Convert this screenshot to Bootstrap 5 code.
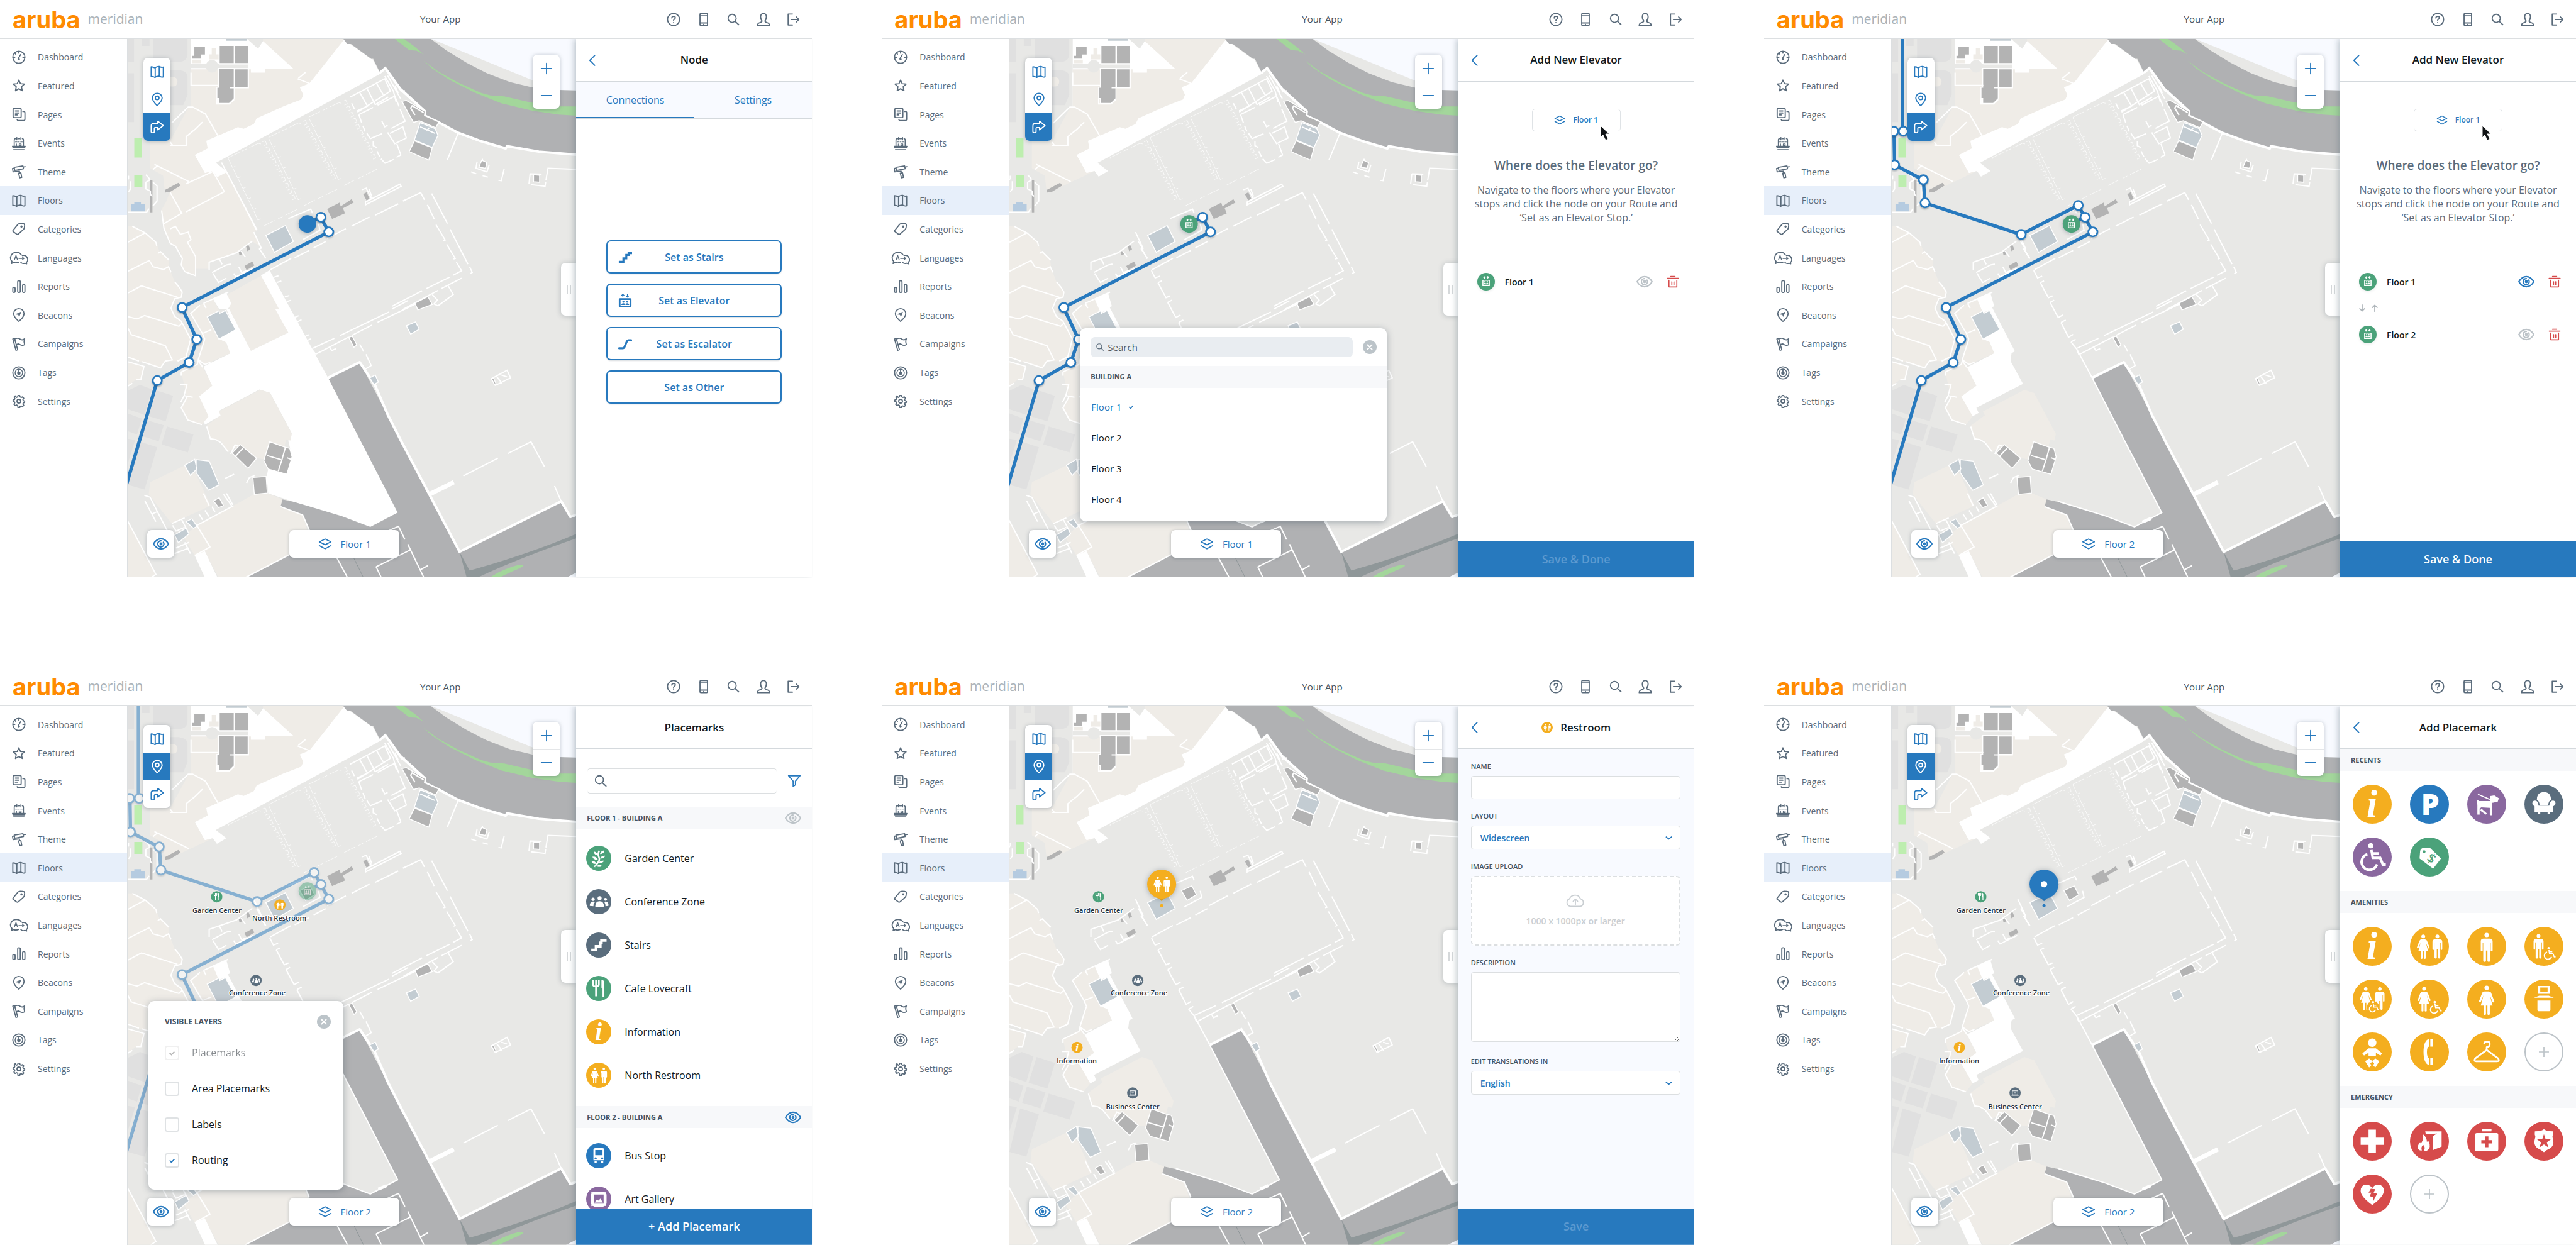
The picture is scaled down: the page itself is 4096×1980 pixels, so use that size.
<!DOCTYPE html>
<html lang="en">
<head>
<meta charset="utf-8">
<meta name="viewport" content="width=device-width, initial-scale=1">
<title>Meridian floor editor</title>
<link rel="stylesheet" href="https://cdn.jsdelivr.net/npm/bootstrap@5.3.0/dist/css/bootstrap.min.css">
<style>
:root{--blue:#2779be;--slate:#5a6b7b;--ink:#101820;--line:#dcdfe1;--pale:#f8faff;--amber:#f4ae1f;--green:#4ba27a;--purple:#8a689f;--red:#d64b4b}
body{font-family:"Open Sans",sans-serif;font-size:16px;color:var(--ink);background:#fff;overflow-x:hidden}
svg{display:block}
.ic{fill:none;stroke:currentColor;stroke-width:2;stroke-linecap:round;stroke-linejoin:round;width:22px;height:22px;flex:none}
.ic.eye-ic{width:26px;height:26px}
.ic.s9{width:9px;height:9px}.ic.s12{width:12px;height:12px}.ic.s14{width:14px;height:14px}.ic.s18{width:18px;height:18px}.ic.s20{width:20px;height:22px}
.board{display:grid;grid-template-columns:repeat(3,minmax(0,1fr));gap:143px 111px}
.app-head{height:62px;border-bottom:1px solid var(--line);color:var(--slate)}
.brand-box{width:341px;padding-left:20px}
.logo-word{font-family:Inter,sans-serif;font-weight:700;font-size:38px;line-height:44px;color:#ff8b00}
.sub-word{font-size:21px;color:#aab2b8;margin-left:12px}
.app-title{font-size:15px;color:#46525d}
.head-tools{width:232px;padding-right:18px}
.tool-btn{color:var(--slate);padding:0;border:0;width:24px;height:24px;display:flex;align-items:center;justify-content:center}
.app-nav{width:203px;border-right:1px solid var(--line);padding-top:6px;flex:none}
.nav-items{height:593px}
.nav-items a{flex:1 1 0;color:var(--slate);font-size:14px;text-decoration:none;padding-left:14px}
.nav-items a.on{background:#e7effa}
.nav-items .slot{width:32px;margin-right:14px;display:flex;justify-content:center}
.nav-items .slot .wide{width:30px}
.map-box{position:relative;overflow:hidden;background:#e8e8e6}
.map-box>svg{width:100%;height:auto}
.float-card{position:absolute;background:#fff;border-radius:7px;box-shadow:0 1px 6px rgba(60,75,90,.35);overflow:hidden}
.float-card .btn{border:0;border-radius:0;width:43px;height:44px;padding:0;display:flex;align-items:center;justify-content:center;color:var(--blue)}
.float-card .btn.on{background:var(--blue);color:#fff}
.tools-left{left:25px;top:30px}
.tools-zoom{right:26px;top:25px}
.tools-zoom .btn{height:43px}
.tools-zoom .btn+.btn{border-top:1px solid #e4e6e8}
.grip{position:absolute;right:0;top:356px;width:24px;height:84px;background:#fff;border:0;border-radius:7px 0 0 7px;box-shadow:0 1px 8px rgba(60,75,90,.3);display:flex;gap:3px;align-items:center;justify-content:center;padding:0}
.grip i{width:2px;height:15px;background:#d5d8da}
.eye-box{left:31px;bottom:31px}
.floor-box{position:absolute;left:0;right:24px;bottom:31px;display:flex;justify-content:center}
.floor-btn{width:175px;height:44px;background:#fff;border:0;border-radius:7px;box-shadow:0 1px 5px rgba(60,75,90,.35);color:var(--blue);font-size:15px;font-weight:500;display:flex;align-items:center;justify-content:center;gap:14px}
.side{width:375px;flex:none;contain:size;background:#fff;position:relative;z-index:1;box-shadow:-3px 0 9px rgba(90,110,120,.38);clip-path:inset(0 0 0 -16px)}
.side-head{height:68px;flex:none;border-bottom:1px solid #d4d9dd;position:relative;background:#fff}
.side-head h2{font-size:17px;font-weight:600;margin:0}
.back-btn{position:absolute;left:15px;top:23px;width:22px;height:22px;border:0;background:none;padding:0;color:var(--blue)}
.tabs-row{height:59px;background:var(--pale);border-bottom:1px solid #d4d9dd}
.tabs-row a{flex:1;color:var(--blue);text-decoration:none;display:flex;align-items:center;justify-content:center}
.tabs-row a.on{box-shadow:inset 0 -2px var(--blue)}
.set-list{padding:193px 48px 0;display:grid;gap:16px}
.set-btn{height:53px;border:2px solid var(--blue);border-radius:7px;background:#fff;color:var(--blue);font-weight:600;position:relative;box-shadow:0 1px 2px rgba(60,75,90,.2);font-size:16px}
.set-btn svg{position:absolute;left:17px;top:14px}
.cta{height:58px;flex:none;margin-top:auto;border:0;border-radius:0;background:var(--blue);color:#fff;font-size:18px;font-weight:600;z-index:1}
.cta:disabled{background:var(--blue);color:#5d9ad0;opacity:1}
.chip{width:141px;height:36px;margin:43px auto 0;border:1px solid #dfe3e6;border-radius:5px;background:#fff;color:var(--blue);font-size:12px;font-weight:600;display:flex;align-items:center;justify-content:center;gap:12px;position:relative}
.chip .cursor{position:absolute;left:107px;top:25px}
.ask{color:var(--slate);text-align:center;padding:0 20px}
.ask h3{font-size:19px;line-height:24px;font-weight:600;margin:42px 0 16px}
.ask p{line-height:22px;margin:0 0 71px}
.stop-row{height:40px;padding:0 24px 0 30px;font-size:14px;font-weight:600}
.stop-row .btn{padding:0;border:0}
.stop-row .see{margin-right:22px}
.swap{height:44px;padding-left:29px;color:#aeb5ba}
.t-blue{color:var(--blue)}.t-mute{color:#bcc3c8}.t-red{color:var(--red)}
.disc{border-radius:50%;display:block;color:#fff;padding:0;border:0;flex:none}
.disc svg{width:100%;height:100%}
.d28{width:28px;height:28px}.d40{width:40px;height:40px}.d62{width:62px;height:62px}.d18{width:18px;height:18px}
.c-amber{background:var(--amber)}.c-green{background:var(--green)}.c-slate{background:#5a6d7d}.c-blue{background:var(--blue)}.c-purple{background:var(--purple)}.c-red{background:var(--red)}
.c-none{background:#fff;border:2px solid #bcc3c8;color:#bcc3c8}
.popup{position:absolute;background:#fff;border-radius:9px;box-shadow:0 2px 12px rgba(60,75,90,.4);overflow:hidden}
.pick-pop{left:112px;top:460px;width:488px;height:307px}
.pick-search{position:relative;padding:14px 16px 14px 17px;gap:16px}
.pick-search input{height:32px;border:0;border-radius:7px;background:#e9edf1;padding:0 10px 0 27px;font-size:15px}
.pick-search .lens{position:absolute;left:25px;top:23px;color:var(--slate)}
.x-btn{width:22px;height:22px;border:0;border-radius:50%;background:#bcc4c9;color:#fff;padding:0;display:flex;align-items:center;justify-content:center;flex:none}
.strip{background:#f7f8fa;color:#43525f;font-size:11px;font-weight:700;height:35px;flex:none;display:flex;align-items:center;justify-content:space-between;padding:0 17px}
.floors{padding:6px 0 0;margin:0;list-style:none}
.floors li{height:49px;padding-left:18px;font-size:15px;display:flex;align-items:center;gap:10px}
.layer-pop{left:33px;bottom:88px;width:310px;height:300px;padding:22px 20px 0 26px}
.layer-pop h3{font-size:12px;font-weight:700;color:#43525f;margin:0}
.layer-pop .form-check{height:57px;margin:0;padding:0;display:flex;align-items:center;gap:20px}
.layer-pop .checks{padding-top:10px}
.layer-pop .form-check-input{float:none;margin:0;width:23px;height:23px;border:2px solid #dfe2e4;border-radius:4px;background-color:#fff}
.layer-pop .form-check-input:checked{background-color:#fff;border-color:#dfe2e4;background-image:url("data:image/svg+xml,%3Csvg xmlns='http://www.w3.org/2000/svg' viewBox='0 0 20 20'%3E%3Cpath d='M6 10l3 3 5-5' fill='none' stroke='%232779be' stroke-width='2'/%3E%3C/svg%3E")}
.layer-pop .form-check-input:disabled{filter:grayscale(1)}
.list-scroll{min-height:0}
.find-row{padding:31px 14px 21px 17px;gap:16px}
.find-row .fbox{position:relative;width:303px;flex:none}
.find-row input{height:40px;border:1px solid #dcdfe1;border-radius:5px;padding-left:40px}
.find-row .lens{position:absolute;left:11px;top:9px;color:var(--slate)}
.marks{list-style:none;margin:0;padding:12px 16px 15px}
.marks.next{padding-top:9px}
.marks li{height:69px;display:flex;align-items:center;gap:21px}
.form-side{background:var(--pale)}
.form-area{padding:20px 22px 0 20px}
.form-area .field{margin-bottom:19px}
.form-area label,.form-area .cap{display:block;font-size:11px;line-height:16px;font-weight:600;color:#43525f;margin-bottom:7px}
.form-area .form-control,.form-area .form-select{border:1px solid #dcdfe1;border-radius:4px;font-size:14px;background-color:#fff}
.form-area input.form-control{height:37px}
.form-area .form-select{height:38px;color:var(--blue);font-weight:600;padding:0 36px 0 14px;background-image:url("data:image/svg+xml,%3Csvg xmlns='http://www.w3.org/2000/svg' viewBox='0 0 16 16'%3E%3Cpath d='M3 6l5 4 5-4' fill='none' stroke='%232779be' stroke-width='2'/%3E%3C/svg%3E");background-size:15px;background-position:right 10px center}
.form-area textarea.form-control{height:111px;resize:vertical}
.drop-zone{height:111px;border:2px dashed #dcdfe1;border-radius:6px;background:#fff;color:#c9ced2;font-size:14px;font-weight:600;width:100%;display:flex;flex-direction:column;align-items:center;justify-content:center;gap:10px}
.drop-zone .ic{width:32px}
.pick-grid{display:grid;grid-template-columns:repeat(4,62px);justify-content:space-between;gap:22px 0;padding:22px 20px 23px}
.pin-name{font:600 11px "Open Sans",sans-serif;fill:#24333f;text-anchor:middle;paint-order:stroke;stroke:#fff;stroke-width:2px;stroke-linejoin:round}
.wall,.wall *{fill:none;stroke:#fff;stroke-width:2px;vector-effect:non-scaling-stroke}
.thick{stroke-width:4px!important}
.bld{fill:#b3b3b3;stroke:#fff;stroke-width:1.5px;vector-effect:non-scaling-stroke}
.pool{fill:#c3ccd2;stroke:#fff;stroke-width:1.5px;vector-effect:non-scaling-stroke}
.earth{fill:#efece7}.blank{fill:#fff}.plot{fill:#e0e0e0}.road{fill:#b0b1b3}
.route{fill:none;stroke:#2779be;stroke-width:6px;stroke-linejoin:round}
.knots circle{fill:#fff;stroke:#2779be;stroke-width:3px;r:8px}
.knots{filter:drop-shadow(0 2px 1px rgba(40,60,80,.35))}
.lifted{filter:drop-shadow(0 1px 4px rgba(40,60,80,.35))}
</style>
<script src="https://cdn.jsdelivr.net/npm/bootstrap@5.3.0/dist/js/bootstrap.bundle.min.js"></script>
</head>
<body>
<svg width="0" height="0" class="position-absolute" aria-hidden="true">
<defs>
<symbol id="gauge" viewBox="0 0 24 24"><circle cx="12" cy="12" r="10.5"/><path d="M12 2v3M5 5l1.600 1.600M2 12h3M19 12h3M11 14.500l4-7M11 14.500a1 1 0 1 0 2 1z"/></symbol>
<symbol id="star" viewBox="0 0 24 24"><path d="M12 2.500l2.800 6.300 6.700.7-5 4.600 1.400 6.900-5.900-3.400L6.100 21l1.400-6.900-5-4.600 6.700-.7z"/></symbol>
<symbol id="pages" viewBox="0 0 24 24"><rect x="2" y="1.500" width="14" height="16" rx="2"/><path d="M6 6h6M6 9.500h6M6 13h3M19 7h1.500a2 2 0 0 1 2 2v11a2 2 0 0 1-2 2.500H11a2 2 0 0 1-2-1.500"/></symbol>
<symbol id="events" viewBox="0 0 24 24"><path d="M4 17V6q0-2 2-2h1M18 4q2 0 2 2v11M10.500 4h3M8.500 2v4M15.500 2v4M1 17h22l-1 2.500H2zM3 23h18" stroke-width="1.800"/><path d="M6 9.500h3M11 9.500h2M15 9.500h3M8 13v3M12.500 13h3.500v3h-3.500z" stroke-width="1.200"/></symbol>
<symbol id="roller" viewBox="0 0 24 24"><path d="M4 4.500l15-2.500 1 5-15 3zM20 4l3-.5M4 6L1 6.500l1 6 11-1.500v3M11.500 14.500l4-.5 1.500 8-3.500.8z"/></symbol>
<symbol id="mapf" viewBox="0 0 24 24"><path d="M1.500 3.500q3.500 0 6.500 2Q12 2 16 3q3 2 6.500 1v17q-3.500 1-6.500-1-4-1-8 2-3-2-6.500-1.500zM8.500 5V21.500M15.500 3v17"/></symbol>
<symbol id="tag" viewBox="0 0 24 24"><path d="M2 14.500L10.500 4q1.500-1.500 4-1.500l5 .5q2.500 0 2.500 3l-.5 4q-.5 2-2 3.500L11 21q-1.500 1-3 0l-5.500-4q-1.500-1-.5-2.500z"/><circle cx="16.500" cy="8" r="1"/></symbol>
<symbol id="lang" viewBox="0 0 32 24"><path d="M16 19.500q-4 2.500-9 .5l-4 2 1-4q-3-2.500-2.500-7Q3 3 11 2.500q6-.3 9 4M22 8q6-1.500 8.500 4t-1.500 8l.5 2.500-3-1q-4 1.500-7-1.500"/><path d="M8.500 15l2.500-7 2.500 7M9.500 12.500h3M16 13h9M22 10.500L24.500 13 22 15.500" stroke-width="1.600"/></symbol>
<symbol id="bars" viewBox="0 0 24 24"><rect x="1.500" y="13" width="4" height="9" rx="2"/><rect x="10" y="1.500" width="4.500" height="20.500" rx="2"/><rect x="18.500" y="8" width="4" height="14" rx="2"/></symbol>
<symbol id="beacon" viewBox="0 0 24 24"><path d="M12 23Q3 15.500 3 9.500a9 8.500 0 0 1 18 0Q21 15.500 12 23z"/><path d="M7.500 10.500l8-3.500-3 7.500-1-3z" fill="currentColor" stroke-width="1"/></symbol>
<symbol id="flag" viewBox="0 0 24 24"><path d="M1.500 3.500l3-1L10 22l-3 1zM5 3.500q5-3 9 0t8-.5q-2 4 0 10-4 2.500-8 0t-6 1"/></symbol>
<symbol id="target" viewBox="0 0 24 24"><circle cx="12" cy="12" r="10.500"/><circle cx="12" cy="12" r="6.500" stroke-width="1.600"/><circle cx="12" cy="12.500" r="2" fill="currentColor"/><path d="M12 12V6"/></symbol>
<symbol id="gear" viewBox="0 0 24 24"><circle cx="12" cy="12" r="3.300"/><path d="M10 4.500L10.500 2h3l.5 2.500 2 1 2.500-1 2 2.500-1.500 2 .7 2 2.300.8v2.500l-2.400.8-.6 2 1.500 2-2 2.400-2.500-1.300-2 1-.5 2.300h-3L10 19.500l-2-1-2.500 1.300-2-2.500L5 15.100l-.6-2L2 12.400v-2.500l2.500-.8.6-2L3.700 5l2-2.200L8 5.500z"/></symbol>
<symbol id="help" viewBox="0 0 24 24"><circle cx="12" cy="12" r="10.500"/><path d="M9 9.500q0-3 3-3t3 2.500q0 1.500-1.500 2.500T12 14M12 17.300v.2"/></symbol>
<symbol id="device" viewBox="0 0 24 24"><rect x="5.500" y="1.500" width="13" height="21" rx="1.500"/><path d="M5.500 5.500h13M5.500 18h13M12 20.300v.1"/></symbol>
<symbol id="search" viewBox="0 0 24 24"><circle cx="10" cy="10" r="7"/><path d="M15.500 15.500l6 5.500"/></symbol>
<symbol id="user" viewBox="0 0 24 24"><path d="M9.500 14.500Q6.500 11 7 6q1-4.500 5-4.500T17 6q.5 5-2.500 8.500 0 2 4 3 4 1 4 5h-21q0-4 4-5 4-1 4-3z"/></symbol>
<symbol id="logout" viewBox="0 0 24 24"><path d="M11 2.500H3.500v19H11M8.500 12H22M17.500 7.500L22 12l-4.500 4.500"/></symbol>
<symbol id="pin" viewBox="0 0 24 24"><path d="M12 23Q3.500 14.500 3.500 9.500a8.500 8 0 0 1 17 0Q20.500 14.500 12 23z"/><circle cx="12" cy="9.500" r="3.200"/></symbol>
<symbol id="turn" viewBox="0 0 24 24"><path d="M1.500 20V10q0-4 4-4H13V2l9.500 7.500L13 17v-4H8.500q-1.500 0-1.500 1.500V20q0 2-2.700 2T1.500 20z"/></symbol>
<symbol id="layers" viewBox="0 0 24 24"><path d="M12 3.500L22 8.500 12 13.500 2 8.500zM2 15l10 5.500L22 15"/></symbol>
<symbol id="eye" viewBox="0 0 24 24"><path d="M1 12q4.500-7.500 11-7.500T23 12q-4.500 7.500-11 7.500T1 12z"/><path d="M15.500 9.500a4.500 4.500 0 1 1-3.500-2"/><circle cx="12" cy="12" r="1.200"/></symbol>
<symbol id="trash" viewBox="0 0 24 24"><path d="M1.500 5.500h21M8 2h8M4.500 9v13h15V9M10 12v6M14 12v6"/></symbol>
<symbol id="funnel" viewBox="0 0 24 24"><path d="M2 3h20l-8 9.500v6l-4 3v-9z"/></symbol>
<symbol id="cross" viewBox="0 0 24 24"><path d="M5 5l14 14M19 5L5 19" stroke-width="4"/></symbol>
<symbol id="tick" viewBox="0 0 24 24"><path d="M4 12l6 6L20 6" stroke-width="4"/></symbol>
<symbol id="back" viewBox="0 0 24 24"><path d="M16 3.500L7.500 12l8.500 8.500"/></symbol>
<symbol id="plus" viewBox="0 0 24 24"><path d="M12 3v18M3 12h18"/></symbol>
<symbol id="minus" viewBox="0 0 24 24"><path d="M3 12h18"/></symbol>
<symbol id="cloud" viewBox="0 0 36 24"><path d="M9 21.500a7 7 0 0 1-1.500-13.500Q10 2 17 1.500t10 6.500a7 7 0 0 1 0 13.500zM18 18V9M14 12.500L18 8.500l4 4"/></symbol>
<symbol id="arrD" viewBox="0 0 12 14"><path d="M6 1v11M1.500 8L6 12.500 10.500 8"/></symbol>
<symbol id="arrU" viewBox="0 0 12 14"><path d="M6 13V2M1.500 6L6 1.500 10.500 6"/></symbol>
<symbol id="stairs" viewBox="0 0 24 24"><path d="M1 20h8v-6h5V8h4V5h6" stroke-width="3.500" stroke-linejoin="miter" stroke-linecap="butt"/></symbol>
<symbol id="lift" viewBox="0 0 24 24"><g fill="currentColor" stroke="none"><path d="M3 8h18q2 0 2 2v12q0 2-2 2H3q-2 0-2-2V10q0-2 2-2zm1 3v10h16V11z" fill-rule="evenodd"/><circle cx="9" cy="14" r="1.800"/><circle cx="15.500" cy="14" r="1.800"/><path d="M5.500 19.500q0-3 3.500-3t3 3zM12.500 19.500q0-3 3-3t3.500 3z"/></g><path d="M8 6V1.500M6 3l2-2 2 2M16 1v4.500M14 4l2 2 2-2" stroke-width="1.600"/></symbol>
<symbol id="escal" viewBox="0 0 24 24"><path d="M1.500 19.500H8q1.500 0 2.500-1.500l4.500-10.500q1-2 2.500-2h5" stroke-width="3.500"/></symbol>

<symbol id="g-lift" viewBox="0 0 69 69"><g fill="currentColor"><path d="M20 27h29v25H20zm4 4v17h21V31z" fill-rule="evenodd"/><circle cx="30" cy="35" r="3"/><circle cx="39" cy="35" r="3"/><path d="M25 45q0-6 5-6t4.500 6 q0-6 4.500-6t5 6z"/><path d="M28 13l5 6h-3v4h-4v-4h-3zM41 23l5-6h-3v-4h-4v4h-3z"/></g></symbol>
<symbol id="g-info" viewBox="0 0 69 69"><text x="34" y="57" font-family="Liberation Serif, serif" font-style="italic" font-weight="700" font-size="68" text-anchor="middle" fill="currentColor">i</text></symbol>
<symbol id="g-park" viewBox="0 0 69 69"><text x="36" y="53" font-family="Open Sans, sans-serif" font-weight="800" font-size="51" text-anchor="middle" fill="currentColor">P</text></symbol>
<symbol id="g-man" viewBox="0 0 69 69"><g fill="currentColor"><circle cx="34.500" cy="14.500" r="4"/><path d="M29 21h11q5 0 5 5v16q0 1.500-1.700 1.500T41.600 42V28h-1v32q0 2-2.400 2t-2.400-2V42h-2.600v18q0 2-2.400 2t-2.400-2V28h-1v14q0 1.500-1.700 1.500T24 42V26q0-5 5-5z"/></g></symbol>
<symbol id="g-woman" viewBox="0 0 69 69"><g fill="currentColor"><circle cx="34.500" cy="14.500" r="4"/><path d="M31 21h7q3.500 0 4.600 3L48 38q.5 1.600-1 2.200t-2.200-1L40 27.500 45 46h-5v15q0 1.500-2.100 1.500T35.800 61V46h-2.600v15q0 1.500-2.100 1.500T29 61V46h-5l5-18.500L24.200 39q-.7 1.600-2.200 1t-1-2.200L26.400 24Q27.500 21 31 21z"/></g></symbol>
<symbol id="g-wheel" viewBox="0 0 69 69"><circle cx="32" cy="14.500" r="4.800" fill="currentColor"/><path d="M33 22l2.500 14h13l5 12h5M36 28h10" fill="none" stroke="currentColor" stroke-width="4.500"/><path d="M26 29.500a14 14 0 1 0 17 18" fill="none" stroke="currentColor" stroke-width="4.500"/></symbol>
<symbol id="g-rest" viewBox="0 0 69 69"><use href="#g-woman" x="-5" y="5" width="57" height="57"/><use href="#g-man" x="20" y="5" width="57" height="57"/></symbol>
<symbol id="g-manwc" viewBox="0 0 69 69"><use href="#g-man" x="-4" y="4" width="58" height="58"/><use href="#g-wheel" x="28" y="31" width="32" height="32"/></symbol>
<symbol id="g-womwc" viewBox="0 0 69 69"><use href="#g-woman" x="-4" y="4" width="58" height="58"/><use href="#g-wheel" x="29" y="33" width="32" height="32"/></symbol>
<symbol id="g-allwc" viewBox="0 0 69 69"><use href="#g-woman" x="-4" y="5" width="54" height="54"/><use href="#g-man" x="21" y="5" width="54" height="54"/><circle cx="36" cy="49" r="11" fill="#f4ae1f"/><use href="#g-wheel" x="23" y="34" width="28" height="28"/></symbol>
<symbol id="g-kiosk" viewBox="0 0 69 69"><g fill="currentColor"><path d="M24 11h21v14H24zm4 3v8h13v-8z" fill-rule="evenodd"/><path d="M17 32l9-3.500h17l9 3.500zM23 37h23v17q0 2-2 2H25q-2 0-2-2z"/></g></symbol>
<symbol id="g-baby" viewBox="0 0 69 69"><g fill="currentColor"><circle cx="34.500" cy="18" r="7.500"/><path d="M28 28h13l11 9-3 4-8-5v6H28v-6l-8 5-3-4z"/><path d="M22 51l7-5 6 5-4 4 2 3-4 4zM47 51l-7-5-6 5 4 4-2 3 4 4z"/></g></symbol>
<symbol id="g-phone" viewBox="0 0 69 69"><g fill="currentColor"><path d="M34 11q-10 3-10 23.500T34 58V46q-4-2-4-11.500T34 25zM36 11h5v14h-5zM36 45h5v13h-5z"/></g></symbol>
<symbol id="g-hang" viewBox="0 0 69 69"><path d="M30 21q0-5 5-5t5 4.500-5.500 5.500v5L14 46q-3 5 2 5h37q5 0 2-5L34.500 31" fill="none" stroke="currentColor" stroke-width="3" stroke-linejoin="round"/></symbol>
<symbol id="g-plus" viewBox="0 0 69 69"><path d="M34.500 25v19M25 34.500h19" stroke="currentColor" stroke-width="2"/></symbol>
<symbol id="g-dog" viewBox="0 0 69 69"><path d="M19 17l21 9" stroke="currentColor" stroke-width="2"/><g fill="currentColor"><path d="M41 20l7-1 8 5-2 6-9 2-4-3zM17 26l4 3h23v25h-4V41l-15-1-3 2v11h-4V36z"/><path d="M25 42l10 9-2 2-10-7z"/></g></symbol>
<symbol id="g-chair" viewBox="0 0 69 69"><g fill="currentColor"><path d="M22 27Q22 13 34.500 13T47 27q-4 1-5 9H27q-1-8-5-9z"/><path d="M14 33q0-5 5-5t6 9h19q1-9 6-9t5 5q0 3-4 5v10H45v4h-4v-4H28v4h-4v-4h-6V38q-4-2-4-5z"/></g></symbol>
<symbol id="g-sale" viewBox="0 0 69 69"><path d="M18 24q1-5 6-6l12 1 19 18-14 18-24-18z" fill="currentColor"/><circle cx="25" cy="25" r="2.500" fill="#4ba27a"/><text x="38" y="45" font-family="Open Sans, sans-serif" font-weight="600" font-size="23" text-anchor="middle" fill="#4ba27a" transform="rotate(35 38 37)">$</text></symbol>
<symbol id="g-aid" viewBox="0 0 69 69"><path d="M28 14h13v14h14v13H41v14H28V41H14V28h14z" fill="currentColor"/></symbol>
<symbol id="g-fire" viewBox="0 0 69 69"><g fill="currentColor"><path d="M27 17h29v27l-15 6V25l7-4-20 1z"/><path d="M23 22q7 6 7 14l2-3q5 8 2 14t-9 4q3-7-2-10-4 4-2 10-8 0-7-8 1-4 4-7l1 3q6-8 4-17z"/></g></symbol>
<symbol id="g-kit" viewBox="0 0 69 69"><g fill="currentColor"><rect x="26" y="13" width="17" height="4" rx="1"/><path d="M17 20h35q3 0 3 3v26q0 3-3 3H17q-3 0-3-3V23q0-3 3-3zm14.500 6v6.500H25v6h6.500V45h6v-6.500H44v-6h-6.500V26z" fill-rule="evenodd"/></g></symbol>
<symbol id="g-badge" viewBox="0 0 69 69"><path d="M34.500 13q4 4 16 4 1 6-1 10 5 14-4 20-7 3-11 7-4-4-11-7-9-6-4-20-2-4-1-10 12 0 16-4z" fill="currentColor"/><path d="M34.500 22l3 9h9.500l-7.500 5.500 3 9-8-5.500-8 5.500 3-9L22 31h9.500z" fill="#d64b4b"/></symbol>
<symbol id="g-heart" viewBox="0 0 69 69"><path d="M34.500 54Q14 39 14 29q0-11 10-11 7 0 10.500 6Q38 18 45 18q10 0 10 11 0 10-20.500 25z" fill="currentColor"/><path d="M32 25l8 1-3 6 6 2-7 14v-8l-6-2 3-6h-5z" fill="#d64b4b"/></symbol>
<symbol id="g-plant" viewBox="0 0 69 69"><path d="M36 14q-5 9-1 17t-4 17-6 9" fill="none" stroke="currentColor" stroke-width="4.500"/><g fill="currentColor"><path d="M38 23q2-9 12-10 0 9-12 10zM38 35q3-8 14-8-2 9-14 8zM35 46q3-6 14-5-3 8-14 5zM31 26q-9 0-10-10 9 1 10 10zM32 38q-11 2-15-8 11-2 15 8zM28 49q-9 3-13-6 9-3 13 6zM29 56q7-6 14-1-7 6-14 1z"/></g></symbol>
<symbol id="g-people" viewBox="0 0 69 69"><g fill="currentColor"><circle cx="37" cy="25" r="5.500"/><path d="M25 48q0-15 12-15t12 15q-12 3-24 0z"/><circle cx="19" cy="28" r="4.500"/><path d="M10 46q0-12 9-12 4 0 5 2-4 4-4 11zM53 34q9 0 8 12l-8 1q0-7-3-11 1-2 3-2z"/><circle cx="53" cy="28" r="4"/></g></symbol>
<symbol id="g-stair" viewBox="0 0 69 69"><path d="M14 48h13V38h12V28h3v-6h14" fill="none" stroke="currentColor" stroke-width="7"/></symbol>
<symbol id="g-fork" viewBox="0 0 69 69"><path d="M19 11v13q0 5 8 5t8-5V11M27 11v45" fill="none" stroke="currentColor" stroke-width="4.500"/><path d="M42 11h3q5 2 5 8v38h-5V35q-3 0-3-3z" fill="currentColor"/></symbol>
<symbol id="g-bus" viewBox="0 0 69 69"><path d="M25 14h20q5 0 5 5v28H20V19q0-5 5-5zm0 5v14h20V19zm1 20a3 3 0 1 0 .1 0zm18 0a3 3 0 1 0 .1 0zM23 49h6v6h-6zM41 49h6v6h-6z" fill="currentColor" fill-rule="evenodd"/></symbol>
<symbol id="g-art" viewBox="0 0 69 69"><path d="M14 15q4 2 8-1h25q4 3 8 1-2 4 1 7v24q-3 4-1 8-4-2-8 1H22q-4-3-8-1 2-4-1-8V22q3-3 1-7zm7 7v25h27V22z" fill="currentColor" fill-rule="evenodd"/><path d="M23 44l7-9 4 4 5-6 7 11z" fill="currentColor"/></symbol>
<symbol id="g-laptop" viewBox="0 0 69 69"><path d="M18 21h33v25H18zM13 49h43" fill="none" stroke="currentColor" stroke-width="4"/><path d="M28 30h13M31 36h7" stroke="currentColor" stroke-width="3"/></symbol>

<!-- hall outline: stepped stalls down the right side, doorways down the left -->
<g id="stalls"><path d="M470 550l10-6 5 20-10 6m6 12l10-6 5 20-10 6m6 12l10-6 5 20-10 6m6 12l10-6 5 20-10 6m6 12l10-6 5 20-10 6m6 12l10-6 5 20-10 6m6 12l10-6 5 20-10 6m6 12l10-6 5 20-10 6m6 12l10-6 5 20-10 6m6 12l10-6 5 20-10 6"/></g>
<g id="doors"><path d="M352 640l14 46 10-6m-8 12l16 50 10-6m-8 12l16 50 10-6m-8 12l16 50 10-6m-8 12l16 50 10-6m-8 12l14 50 10-6"/></g>
<g id="topEdge"><path d="M352 640v-6L390 606m9-7l16-11m10-8l30-22 10 3"/></g>
<g id="botEdge"><path d="M590 910l-40 30m-10 8l-16 12m-12 8l-38 30"/></g>

<g id="landTop">
<path class="plot" d="M0 0H24V125H0zM0 185H24V445H0zM52 0H78V40H52zM90 0H210V90Q205 125 180 125H90zM90 168H180Q210 175 210 205V300L195 355H90z"/>
<path class="blank" d="M222 0H757L765 30 775 30 848 110 852 108 880 188 308 662 345 705 312 735 298 705 270 718 235 620 222 500z"/>
<path class="earth" d="M462 0H757L633 240 595 185zM222 164H430L430 182 480 182 480 160 578 160 633 240 600 260 612 300 605 325 545 360 450 425 440 455 405 480 385 472 275 545 280 585 235 620 270 716 298 705 150 812 130 800 125 730 80 690V545H150L215 362H222z"/>
<path d="M222 136H420V158H222z" fill="#e8e8e6"/><ellipse cx="295" cy="148" rx="22" ry="34" fill="#e8e8e6"/>
<path class="earth" d="M285 85H318V112H285zM150 205Q175 200 175 230T150 255zM294 50H308V85H294zM225 112H257V132H225z"/>
<path class="bld" d="M232 44H272V88H257V110H225V90H232zM320 37H372V134H320zM374 37H421V134H374zM318 160H372V260H372V320L355 346H318V320H312V260H318zM374 162H421V260H374z"/>
<path d="M345 0H415V12H345z" fill="#c3ccd2"/><path d="M415 0H472V15L455 55z" fill="#e8e8e6"/>
<path d="M1053 0H1568V280H1500z" fill="#f8faff"/>
<path class="road" d="M750 0L765 30 778 30 848 108 855 108 878 180 897 158 915 200 950 270 1035 388 1033 410 1083 445 1150 500 1230 545 1315 585 1320 573 1430 600 1500 612 1568 617V277L1500 274 1410 261 1330 232 1250 185 1180 130 1110 65 1053 0z"/>
<path fill="#a3d69b" d="M928 0H960L1000 45 1030 85 1005 65 980 62zM1030 118L1080 175 1150 235 1230 290 1262 303 1310 308 1400 340 1500 362H1568V412L1500 405 1410 385 1300 345 1210 290 1120 220 1060 160z"/>
<path fill="#bdeeaf" d="M25 528H51V633H25zM25 725H53V789H25z"/>
<path fill="#b3b3b3" d="M80 755H88V925H80zM133 805L178 768 186 782 150 816 133 820zM695 908L738 873 742 893 780 855 787 873 750 903 757 930 712 960zM820 828L832 818 842 852 832 862zM388 1133L397 1128 400 1148 390 1152zM412 1100L420 1093 428 1122 418 1132zM408 1210L435 1187 442 1208 415 1232z"/>
<path fill="#b5cbe0" d="M15 882H25V870H48V882H62V921H15z"/>
<g class="wall">
<path d="M0 924H68L76 905M5 730v15l-5 10M12 760V800L5 815M65 725l12 20v10l-12 10V800l16 12V830l7 10M90 765L104 785V865L90 890M95 670L215 762M90 697L103 680M150 568H205M155 450L212 365H228L272 402 320 530M262 445L235 485 205 522V568H158L150 552M222 182V250H320M480 160H430M312 320V348H355L372 325M357 262H421V162M422 135H320M595 212L620 180M592 215L635 240"/>
<path class="thick" d="M878 183L897 158 950 270 1035 388 1033 410 1083 447 1150 502 1230 547 1315 585 1320 573 1430 602 1568 619"/>
<use href="#stalls"/><use href="#topEdge"/>
<use href="#stalls" x="140" y="-108"/><use href="#doors" x="140" y="-108"/><use href="#topEdge" x="140" y="-108"/><use href="#botEdge" x="140" y="-108"/>
<use href="#stalls" x="280" y="-216"/><use href="#doors" x="280" y="-216"/><use href="#topEdge" x="280" y="-216"/><use href="#botEdge" x="280" y="-216"/>
<path d="M775 312L895 215 915 280 800 392M780 345l10 30M800 385l35-25-28-75M832 262l30 90 45-40M865 235l25 65M895 200l30 80 10 60M805 405l50-38M870 355l60-48 15 55M948 375l18 65-48 38M805 405l10 45m4 15l8 30m6 10l12 28 40-26M905 500l25 60 40-30-12-60-45 35M855 545v25l12 10M868 600l10 30m4 10l14 24 30-20M936 632l15-12-14-60M885 440l10 30 10-8M905 198L950 320M930 250l12 40M950 285l15-8"/>
<path d="M815 805l18-10M830 795l20 60M840 800l10 40M828 870L948 775 952 787 828 885zM1150 505L1112 647M1216 655L1212 690 1250 710 1258 672M1235 640l-5 20M1195 710l18 10M1235 730l18 8M1310 693L1300 757 1290 755M1568 697L1462 690 1455 755M1400 720L1396 775M1400 720L1440 722M1404 778L1452 786 1454 765"/>
<path d="M958 865L1020 820 1033 858M1043 885l24 75M1073 990l32 82-6 4M1110 1095l30 75-6 4M1144 1190l18 46-30 24M1058 825l55 160M1122 1015l62 185M1190 1215l9 30-7 6M942 880l-80 60M842 950l-62 48M760 1012l-65 52M690 1080l-42 34M632 1128l-50 38M570 1170L498 1230M1120 1270l-80 60M1025 1342L920 1425M1162 1275l-70 55M1080 1340L960 1440M1115 1315L1133 1362 1080 1422 1066 1412 1078 1392 1060 1362M560 958l78-50 6 22M665 985l5 35-60 50M440 1030l26 85-6 5 22 50M285 1230V1190L380 1140 435 1078M295 1245L345 1205 360 1200M298 1250L318 1298 345 1275M320 1170l10 32M370 1250l8 18 60-46M388 1215l10 30 20-12M395 1130l16 32"/>
</g>
<path class="pool" d="M482 1048L550 995 578 1080 512 1137zM1018 448L1070 480 1080 515 1060 580 998 540z"/>
<path class="wall" d="M1018 470L1070 505M1050 475L1040 490"/>
<path class="bld" d="M955 335L970 330 1035 388 1033 410 1083 445 1072 475 1015 438 995 447zM998 545L1060 582 1048 647 980 602zM1232 648L1250 660 1245 690 1222 685zM1412 725L1433 728 1433 765 1412 762zM1000 1408L1045 1373 1060 1415 1010 1444z"/>
<path class="wall" d="M1000 408L985 370 990 358 1030 395"/>
</g>

<g id="landLow">
<path class="earth" d="M80 920L205 828 240 880 290 1045 155 1140 75 985zM0 1120L45 1250 100 1410 80 1428H0zM440 985L490 980 540 1012 533 1050 610 1095 640 1250 410 1428H318L270 1290 235 1310 195 1210 245 1150z"/>
<path class="blank" d="M235 1310L270 1287 318 1440H274z"/>
<path class="road" d="M698 365L808 282 1050 985 1155 1290 1508 1022 1540 1105 1568 1090V1440H400L565 1305 640 1245 633 1175 610 1095 533 1050 540 1012 580 1025 745 1100 845 1158 940 1082z"/>
<path fill="#8f9799" d="M1155 1292L1190 1390Q1400 1300 1568 1190V1215Q1350 1330 1200 1440H1182z"/>
<path fill="#a3d69b" d="M1245 1440L1290 1400Q1350 1358 1370 1360T1345 1390L1275 1440z"/>
<path fill="#f8faff" d="M1510 1440L1568 1395V1440z"/>
<path d="M788 1325L825 1440" stroke="#8f9799" fill="none" vector-effect="non-scaling-stroke"/>
<g class="wall">
<path class="thick" d="M698 365L808 282 860 400 905 560 955 710 1050 985 1155 1290 1508 1022 1540 1105 1568 1090"/>
<path d="M533 1050L610 1095 633 1175M905 1180L943 1155 965 1225M975 1250L1035 1440M865 1370L985 1280M865 1370L887 1440M728 1320L770 1440M1020 1385L1045 1363M410 1428L565 1305"/>
<path d="M655 240L770 148M645 208L720 155M740 140L910 15M920 0L975 -45M780 140L850 85M870 70L1005 -30M808 187L822 225M830 240L848 300 828 318M703 200l8 20 15-10M1168 887L1288 792M1323 767L1403 705 1450 838M1485 940L1508 1022M1265 370L1320 325 1332 365 1280 405zM1285 360l18 35M1300 350l20 10M60 990L80 1000 108 1085 140 1180M62 1020L100 1130M85 1090l18-12M0 1120L100 1410 82 1428M155 1140L200 1110M158 1150l12 30 30-20M190 1120l20 60M250 1090l12 30M270 1070l14 32M295 1050l10 28M230 1160L370 1045M265 980L285 1045M335 985l28 60M345 980l22 60M340 900l32-22M415 925l10-30 18-10M240 1145L288 1265 235 1310M165 1300L215 1270M170 1270l45-30M200 1240l20 60M185 400L208 400 198 460 228 468M198 460l-12 35M360 770L375 722 395 735"/>
</g>
<path d="M1050 985L1135 920" stroke="#fff" stroke-width="7" vector-effect="non-scaling-stroke"/>
<path class="pool" d="M240 800L285 808 320 935 283 963 240 870zM200 830L235 798 242 850 220 885zM205 1130L225 1115 243 1155 230 1165zM165 1200L205 1165 215 1195 178 1242zM843 365L862 350 873 388 857 400zM970 88L1002 68 1015 107 985 133z"/>
<path class="bld" d="M437 895L483 890 487 978 442 985zM300 1020L320 1003 335 1045 318 1055zM365 765L393 720 450 793 420 847zM770 150L782 143 798 190 788 203zM1266 370L1273 366 1282 398 1278 404zM495 705L550 735 565 740 573 785 555 878 490 850 475 805z"/>
<path class="wall" d="M485 778L535 800M550 735L538 800 525 862M555 790l16 10M375 785L402 740"/>
</g>

<g id="landWest">
<path class="plot" d="M15 1130L80 1098 143 1122 105 1258 15 1228zM160 1125L257 1157 217 1292 117 1262zM15 1250L90 1278 65 1362 15 1345zM108 1283L207 1313 180 1398 83 1368zM224 1320L365 1362 335 1458 195 1415zM15 1385L55 1392 15 1520zM72 1398L172 1430 105 1655 15 1630z"/>
<path class="earth" d="M15 255H40L108 290 165 340 185 390 232 435 238 480 265 550 305 605 300 632 265 640 245 690 265 735 300 760 350 855 325 950 280 972 215 972 190 1008 15 955zM15 978L102 1000 85 1070 60 1070 15 1105zM350 718L400 675 468 640 500 700 438 737 500 855 535 870 560 930 425 990 390 965 425 855 412 825zM300 1030L400 975 465 1103 395 1160 445 1265 410 1310 335 1285 300 1220 330 1165zM500 1240L720 1125 772 1142 888 1360 880 1395 858 1388 848 1428 772 1405 745 1495 700 1488 615 1418 550 1452 510 1395 455 1385 435 1315 510 1260z"/>
<path class="wall" d="M40 255L108 290 165 340 170 360M15 340L108 290M175 400L190 390 235 435M15 495L130 437 150 470 205 485 232 470 246 500M265 550L290 580 305 605 300 632 265 640 245 690 265 735 300 760M15 610L88 572 280 632M15 735L65 748 105 730 288 787 305 770M15 795L35 832 215 890 252 965M300 760L350 855 325 950 280 972M255 965L215 972 190 1008 90 975M75 972L15 950M15 975L102 1000 85 1070 60 1070M40 1090L15 1105M412 825L460 805M425 855L412 825 350 718 400 675M418 665L550 605M418 665L432 690M425 855L390 965 425 990 455 978M300 1030L385 990 390 970 415 1005M300 1030L300 1050M330 1165L300 1220 335 1285 410 1310M435 1320L455 1385 485 1390 510 1405 550 1455"/>
</g>

<symbol id="landOne" viewBox="0 0 713 856" preserveAspectRatio="none">
<rect width="713" height="856" fill="#e8e8e6"/>
<g transform="translate(-.9 -.9) scale(.4575 .2989)"><path class="earth" d="M150 812L298 700 345 708 450 1020 440 1035 465 1110 435 1080 380 1140 285 1190V1225H238V1262L200 1240 190 1210 192 1180 185 1130 150 1090 128 1010 118 915 135 870zM350 1360L465 1262 530 1440H355z"/><path class="blank" d="M465 1260L495 1233 568 1440H528zM298 1385L345 1355 362 1410 350 1440H320z"/><use href="#landTop"/>
<g class="wall"><use href="#doors"/><use href="#botEdge"/><path d="M205 773L298 708 338 815 205 922M150 820L190 930 128 985M120 915L128 1010 150 1090 168 1105 192 1170 188 1205 200 1240 238 1262V1160L210 1085 222 1070 212 1030 185 1042 168 1000 150 1012M328 660L452 1020M312 735L345 708 450 1020M510 1270l16-8M520 1298l16-8M548 1375l16-8M554 1400l16-8"/></g></g>
<g transform="translate(-.9 429.5) scale(.4575 .2989)"><path class="earth" d="M355 0H520L560 125 430 222z"/><path class="blank" d="M515 0H568L698 365 940 1082 845 1158 745 1110 580 1025 490 980 485 890 490 850 555 878 573 785 560 700 572 660 497 445 460 427 320 540 325 565 270 615 265 580 280 570 243 453 295 408 265 305 358 235 345 180 320 160 375 110 345 0H355L430 222 560 125z"/></g>
<g transform="translate(-4.500 221.500) scale(.2989)"><use href="#landWest"/><path class="pool" d="M438 737L500 705 505 718 535 703 590 805 500 855z"/></g>
<g transform="translate(-.9 429.5) scale(.4575 .2989)"><use href="#landLow"/><path class="wall" d="M580 45l16-10M588 70l18-14M610 150l22-14M618 172l20-14M628 185L655 240"/></g>
</symbol>
<symbol id="landTwo" viewBox="0 0 713 856" preserveAspectRatio="none">
<rect width="713" height="856" fill="#e8e8e6"/>
<g transform="translate(-.9 -.9) scale(.4575 .2989)"><use href="#landTop"/></g>
<g transform="translate(-4.500 221.500) scale(.2989)"><use href="#landWest"/><path class="blank" d="M468 640L540 612 560 680 548 685 670 920 652 930 647 972 713 1093 465 1220 477 1248 445 1265 385 1160 465 1103 415 1005 560 930 535 870 500 855 590 800 535 700 500 715z"/><path class="pool" d="M438 737L500 705 505 718 535 703 590 805 500 855z"/><path class="bld" d="M930 240L985 215 1010 262 960 292z"/><path class="wall" d="M770 490L790 530 815 520M805 555l20-10M805 555L848 635 870 625M857 660l22-12M857 660L900 740 925 727M915 767l25-14M915 767L955 845 980 830M968 870l25-14M968 870L1000 910 1080 1060M1010 938L1000 912M700 335L725 375 722 380 748 428"/></g>
<g transform="translate(-.9 429.5) scale(.4575 .2989)"><use href="#landLow"/><path class="wall" d="M580 1022L745 1100 845 1158 940 1082 698 365"/><path class="blank" d="M870 1125L900 1105 905 1120 875 1140z"/></g>
</symbol>
</defs>
</svg>

<template id="headPart">
<header class="app-head d-flex align-items-center">
<div class="brand-box d-flex align-items-center"><span class="logo-word">aruba</span><span class="sub-word">meridian</span></div>
<div class="app-title flex-fill text-center">Your App</div>
<div class="head-tools d-flex justify-content-between">
<button class="btn tool-btn" aria-label="Help"><svg class="ic"><use href="#help"/></svg></button>
<button class="btn tool-btn" aria-label="Devices"><svg class="ic"><use href="#device"/></svg></button>
<button class="btn tool-btn" aria-label="Search"><svg class="ic"><use href="#search"/></svg></button>
<button class="btn tool-btn" aria-label="Account"><svg class="ic"><use href="#user"/></svg></button>
<button class="btn tool-btn" aria-label="Log out"><svg class="ic"><use href="#logout"/></svg></button>
</div>
</header>
</template>
<template id="navPart">
<nav class="app-nav"><div class="nav-items d-flex flex-column">
<a href="#" class="d-flex align-items-center"><span class="slot"><svg class="ic"><use href="#gauge"/></svg></span>Dashboard</a>
<a href="#" class="d-flex align-items-center"><span class="slot"><svg class="ic"><use href="#star"/></svg></span>Featured</a>
<a href="#" class="d-flex align-items-center"><span class="slot"><svg class="ic"><use href="#pages"/></svg></span>Pages</a>
<a href="#" class="d-flex align-items-center"><span class="slot"><svg class="ic"><use href="#events"/></svg></span>Events</a>
<a href="#" class="d-flex align-items-center"><span class="slot"><svg class="ic"><use href="#roller"/></svg></span>Theme</a>
<a href="#" class="d-flex align-items-center on" aria-current="page"><span class="slot"><svg class="ic"><use href="#mapf"/></svg></span>Floors</a>
<a href="#" class="d-flex align-items-center"><span class="slot"><svg class="ic"><use href="#tag"/></svg></span>Categories</a>
<a href="#" class="d-flex align-items-center"><span class="slot"><svg class="ic wide"><use href="#lang"/></svg></span>Languages</a>
<a href="#" class="d-flex align-items-center"><span class="slot"><svg class="ic"><use href="#bars"/></svg></span>Reports</a>
<a href="#" class="d-flex align-items-center"><span class="slot"><svg class="ic"><use href="#beacon"/></svg></span>Beacons</a>
<a href="#" class="d-flex align-items-center"><span class="slot"><svg class="ic"><use href="#flag"/></svg></span>Campaigns</a>
<a href="#" class="d-flex align-items-center"><span class="slot"><svg class="ic"><use href="#target"/></svg></span>Tags</a>
<a href="#" class="d-flex align-items-center"><span class="slot"><svg class="ic"><use href="#gear"/></svg></span>Settings</a>
</div></nav>
</template>
<template id="toolsPart">
<div class="float-card tools-left">
<button class="btn" data-tool="map" aria-label="Map"><svg class="ic"><use href="#mapf"/></svg></button>
<button class="btn" data-tool="pin" aria-label="Placemarks"><svg class="ic"><use href="#pin"/></svg></button>
<button class="btn" data-tool="route" aria-label="Routing"><svg class="ic"><use href="#turn"/></svg></button>
</div>
<div class="float-card tools-zoom">
<button class="btn" aria-label="Zoom in"><svg class="ic"><use href="#plus"/></svg></button>
<button class="btn" aria-label="Zoom out"><svg class="ic"><use href="#minus"/></svg></button>
</div>
<button class="grip" aria-label="Collapse panel"><i></i><i></i></button>
<div class="float-card eye-box"><button class="btn" aria-label="Visible layers"><svg class="ic eye-ic"><use href="#eye"/></svg></button></div>
<div class="floor-box"><button class="floor-btn"><svg class="ic"><use href="#layers"/></svg><span class="floor-name"></span></button></div>
</template>

<main class="board">

<section class="screen" data-tool="route" data-floor="Floor 1">
<div data-part="head"></div>
<div class="d-flex">
<div data-part="nav"></div>
<div class="map-box flex-fill">
<svg viewBox="0 0 713 856"><use href="#landOne" width="713" height="856"/>
<g transform="scale(.8967) translate(-227 -69)"><path class="route" d="M545 397L569 385 583.500 411 323 545 349.500 601.500 336 642.500 279.500 674.500 224 862"/>
<g class="knots"><circle cx="569.500" cy="385"/><circle cx="583.500" cy="411"/><circle cx="323.500" cy="545"/><circle cx="349.500" cy="601.500"/><circle cx="336" cy="642.500"/><circle cx="279.500" cy="674.500"/></g><ellipse class="lifted" cx="545.500" cy="397" rx="15.500" ry="15.500" fill="#2779be"/></g></svg>
<div data-part="tools"></div>
</div>
<aside class="side d-flex flex-column">
<div class="side-head d-flex align-items-center justify-content-center"><button class="back-btn" aria-label="Back"><svg class="ic"><use href="#back"/></svg></button><h2>Node</h2></div>
<nav class="tabs-row d-flex"><a href="#" class="on">Connections</a><a href="#">Settings</a></nav>
<div class="set-list">
<button class="set-btn"><svg class="ic"><use href="#stairs"/></svg>Set as Stairs</button>
<button class="set-btn"><svg class="ic"><use href="#lift"/></svg>Set as Elevator</button>
<button class="set-btn"><svg class="ic"><use href="#escal"/></svg>Set as Escalator</button>
<button class="set-btn">Set as Other</button>
</div>
</aside>
</div>
</section>

<section class="screen" data-tool="route" data-floor="Floor 1">
<div data-part="head"></div>
<div class="d-flex">
<div data-part="nav"></div>
<div class="map-box flex-fill">
<svg viewBox="0 0 713 856"><use href="#landTwo" width="713" height="856"/>
<g transform="scale(.8967) translate(-227 -69)"><path class="route" d="M545 397L569 385 583.500 411 323 545 349.500 601.500 336 642.500 279.500 674.500 224 862"/>
<g class="knots"><circle cx="569.500" cy="385"/><circle cx="583.500" cy="411"/><circle cx="323.500" cy="545"/><circle cx="349.500" cy="601.500"/><circle cx="336" cy="642.500"/><circle cx="279.500" cy="674.500"/></g><g color="#fff"><ellipse class="lifted" cx="545.500" cy="397" rx="15.500" ry="15.500" fill="#4ba27a"/><use href="#g-lift" x="530.500" y="382" width="30" height="30"/></g></g></svg>
<div data-part="tools"></div>
<div class="popup pick-pop">
<div class="pick-search d-flex align-items-center"><svg class="ic lens s14"><use href="#search"/></svg><input class="form-control" type="search" placeholder="Search" aria-label="Search floors"><button class="x-btn" aria-label="Close"><svg class="ic s12"><use href="#cross"/></svg></button></div>
<div class="strip">BUILDING A</div>
<ul class="floors"><li class="t-blue">Floor 1 <svg class="ic s9"><use href="#tick"/></svg></li><li>Floor 2</li><li>Floor 3</li><li>Floor 4</li></ul>
</div>
</div>
<aside class="side d-flex flex-column">
<div class="side-head d-flex align-items-center justify-content-center"><button class="back-btn" aria-label="Back"><svg class="ic"><use href="#back"/></svg></button><h2>Add New Elevator</h2></div>
<button class="chip"><svg class="ic s18"><use href="#layers"/></svg>Floor 1<svg class="cursor" width="16" height="26" viewBox="0 0 16 26"><path d="M1 1v19l4-4 4 8 4-2-4-8h6z" fill="#101315" stroke="#fff"/></svg></button>
<div class="ask"><h3>Where does the Elevator go?</h3><p>Navigate to the floors where your Elevator stops and click the node on your Route and ‘Set as an Elevator Stop.’</p></div>
<div class="stop-row d-flex align-items-center"><span class="disc d28 c-green shadow-sm"><svg><use href="#g-lift"/></svg></span><span class="ms-3 flex-fill">Floor 1</span><button class="btn t-mute see" aria-label="Show floor 1"><svg class="ic eye-ic"><use href="#eye"/></svg></button><button class="btn t-red" aria-label="Delete floor 1"><svg class="ic s20"><use href="#trash"/></svg></button></div>
<button class="btn cta" disabled>Save &amp; Done</button>
</aside>
</div>
</section>

<section class="screen" data-tool="route" data-floor="Floor 2">
<div data-part="head"></div>
<div class="d-flex">
<div data-part="nav"></div>
<div class="map-box flex-fill">
<svg viewBox="0 0 713 856"><use href="#landTwo" width="713" height="856"/>
<g id="fullRoute" transform="scale(.8967) translate(-227 -69)"><path class="route" d="M246 60V232.500M230.500 232.500H270M231 232L232 292 283 319 286 360 456 415.500 557.500 364 569.500 385.500 583.500 411 323 545 349.500 601.500 336 642.500 279.500 674.500 224 862M545 397L569 385"/>
<g class="knots"><circle cx="230.500" cy="232.500"/><circle cx="247.500" cy="232.500"/><circle cx="232" cy="292"/><circle cx="283" cy="318.500"/><circle cx="286" cy="359.500"/><circle cx="456.500" cy="415.500"/><circle cx="557.500" cy="364"/><circle cx="569.500" cy="385"/><circle cx="583.500" cy="411"/><circle cx="323.500" cy="545"/><circle cx="349.500" cy="601.500"/><circle cx="336" cy="642.500"/><circle cx="279.500" cy="674.500"/></g><g color="#fff"><ellipse class="lifted" cx="545.500" cy="397" rx="15.500" ry="15.500" fill="#4ba27a"/><use href="#g-lift" x="530.500" y="382" width="30" height="30"/></g></g></svg>
<div data-part="tools"></div>
</div>
<aside class="side d-flex flex-column">
<div class="side-head d-flex align-items-center justify-content-center"><button class="back-btn" aria-label="Back"><svg class="ic"><use href="#back"/></svg></button><h2>Add New Elevator</h2></div>
<button class="chip"><svg class="ic s18"><use href="#layers"/></svg>Floor 1<svg class="cursor" width="16" height="26" viewBox="0 0 16 26"><path d="M1 1v19l4-4 4 8 4-2-4-8h6z" fill="#101315" stroke="#fff"/></svg></button>
<div class="ask"><h3>Where does the Elevator go?</h3><p>Navigate to the floors where your Elevator stops and click the node on your Route and ‘Set as an Elevator Stop.’</p></div>
<div class="stop-row d-flex align-items-center"><span class="disc d28 c-green shadow-sm"><svg><use href="#g-lift"/></svg></span><span class="ms-3 flex-fill">Floor 1</span><button class="btn t-blue see" aria-label="Show floor 1"><svg class="ic eye-ic"><use href="#eye"/></svg></button><button class="btn t-red" aria-label="Delete floor 1"><svg class="ic s20"><use href="#trash"/></svg></button></div>
<div class="swap d-flex align-items-center gap-2"><svg class="ic s12"><use href="#arrD"/></svg><svg class="ic s12"><use href="#arrU"/></svg></div>
<div class="stop-row d-flex align-items-center"><span class="disc d28 c-green shadow-sm"><svg><use href="#g-lift"/></svg></span><span class="ms-3 flex-fill">Floor 2</span><button class="btn t-mute see" aria-label="Show floor 2"><svg class="ic eye-ic"><use href="#eye"/></svg></button><button class="btn t-red" aria-label="Delete floor 2"><svg class="ic s20"><use href="#trash"/></svg></button></div>
<button class="btn cta">Save &amp; Done</button>
</aside>
</div>
</section>

<section class="screen" data-tool="pin" data-floor="Floor 2">
<div data-part="head"></div>
<div class="d-flex">
<div data-part="nav"></div>
<div class="map-box flex-fill">
<svg viewBox="0 0 713 856"><use href="#landTwo" width="713" height="856"/><use href="#fullRoute" opacity=".5"/>
<g color="#fff"><circle cx="141.500" cy="303" r="9" fill="#4ba27a"/><use href="#g-fork" x="132.500" y="294" width="18" height="18"/><circle cx="242" cy="316" r="9" fill="#f4ae1f"/><use href="#g-rest" x="233" y="307" width="18" height="18"/><circle cx="204" cy="436" r="9" fill="#5a6d7d"/><use href="#g-people" x="195" y="427" width="18" height="18"/></g>
<text class="pin-name" x="142" y="329">Garden Center</text><text class="pin-name" x="241" y="341">North Restroom</text><text class="pin-name" x="206" y="460">Conference Zone</text></svg>
<div data-part="tools"></div>
<div class="popup layer-pop">
<div class="d-flex align-items-center justify-content-between"><h3>VISIBLE LAYERS</h3><button class="x-btn" aria-label="Close"><svg class="ic s12"><use href="#cross"/></svg></button></div>
<div class="checks">
<div class="form-check"><input class="form-check-input" type="checkbox" id="ly1" checked disabled><label class="form-check-label" for="ly1">Placemarks</label></div>
<div class="form-check"><input class="form-check-input" type="checkbox" id="ly2"><label class="form-check-label" for="ly2">Area Placemarks</label></div>
<div class="form-check"><input class="form-check-input" type="checkbox" id="ly3"><label class="form-check-label" for="ly3">Labels</label></div>
<div class="form-check"><input class="form-check-input" type="checkbox" id="ly4" checked><label class="form-check-label" for="ly4">Routing</label></div>
</div>
</div>
</div>
<aside class="side d-flex flex-column">
<div class="side-head d-flex align-items-center justify-content-center"><h2>Placemarks</h2></div>
<div class="list-scroll flex-fill overflow-hidden">
<div class="find-row d-flex align-items-center"><div class="fbox"><svg class="ic lens"><use href="#search"/></svg><input type="search" class="form-control" aria-label="Search placemarks"></div><button class="btn p-0 border-0 t-blue" aria-label="Filter"><svg class="ic"><use href="#funnel"/></svg></button></div>
<div class="strip">FLOOR 1 - BUILDING A<svg class="ic eye-ic t-mute"><use href="#eye"/></svg></div>
<ul class="marks">
<li><span class="disc d40 c-green"><svg><use href="#g-plant"/></svg></span>Garden Center</li>
<li><span class="disc d40 c-slate"><svg><use href="#g-people"/></svg></span>Conference Zone</li>
<li><span class="disc d40 c-slate"><svg><use href="#g-stair"/></svg></span>Stairs</li>
<li><span class="disc d40 c-green"><svg><use href="#g-fork"/></svg></span>Cafe Lovecraft</li>
<li><span class="disc d40 c-amber"><svg><use href="#g-info"/></svg></span>Information</li>
<li><span class="disc d40 c-amber"><svg><use href="#g-rest"/></svg></span>North Restroom</li>
</ul>
<div class="strip">FLOOR 2 - BUILDING A<svg class="ic eye-ic t-blue"><use href="#eye"/></svg></div>
<ul class="marks next">
<li><span class="disc d40 c-blue"><svg><use href="#g-bus"/></svg></span>Bus Stop</li>
<li><span class="disc d40 c-purple"><svg><use href="#g-art"/></svg></span>Art Gallery</li>
</ul>
</div>
<button class="btn cta">+ Add Placemark</button>
</aside>
</div>
</section>

<section class="screen" data-tool="pin" data-floor="Floor 2">
<div data-part="head"></div>
<div class="d-flex">
<div data-part="nav"></div>
<div class="map-box flex-fill">
<svg viewBox="0 0 713 856"><use href="#landTwo" width="713" height="856"/>
<g id="places" color="#fff"><circle cx="141.500" cy="303" r="9" fill="#4ba27a"/><use href="#g-fork" x="132.500" y="294" width="18" height="18"/><circle cx="204" cy="436" r="9" fill="#5a6d7d"/><use href="#g-people" x="195" y="427" width="18" height="18"/><circle cx="107.500" cy="542.500" r="9" fill="#f4ae1f"/><use href="#g-info" x="98.500" y="533.500" width="18" height="18"/><circle cx="196" cy="615" r="9" fill="#5a6d7d"/><use href="#g-laptop" x="187" y="606" width="18" height="18"/></g>
<text class="pin-name" x="142" y="329">Garden Center</text><text class="pin-name" x="206" y="460">Conference Zone</text><text class="pin-name" x="107" y="568">Information</text><text class="pin-name" x="196" y="641">Business Center</text>
<g color="#fff"><path d="M236 304l6 6 6-6z" fill="#f4ae1f"/><circle class="lifted" cx="242" cy="283" r="23" fill="#f4ae1f"/><use href="#g-rest" x="222" y="263" width="40" height="40"/><circle cx="242" cy="317" r="2.500" fill="#f4ae1f"/></g></svg>
<div data-part="tools"></div>
</div>
<aside class="side form-side d-flex flex-column">
<div class="side-head d-flex align-items-center justify-content-center"><button class="back-btn" aria-label="Back"><svg class="ic"><use href="#back"/></svg></button><span class="disc d18 c-amber me-2"><svg><use href="#g-rest"/></svg></span><h2 class="ms-1">Restroom</h2></div>
<form class="form-area">
<div class="field"><label for="fName">NAME</label><input id="fName" class="form-control" type="text"></div>
<div class="field"><label for="fLayout">LAYOUT</label><select id="fLayout" class="form-select"><option>Widescreen</option></select></div>
<div class="field"><span class="cap">IMAGE UPLOAD</span><button type="button" class="drop-zone"><svg class="ic"><use href="#cloud"/></svg>1000 x 1000px or larger</button></div>
<div class="field"><label for="fDesc">DESCRIPTION</label><textarea id="fDesc" class="form-control"></textarea></div>
<div class="field pt-1"><label for="fLang">EDIT TRANSLATIONS IN</label><select id="fLang" class="form-select"><option>English</option></select></div>
</form>
<button class="btn cta" disabled>Save</button>
</aside>
</div>
</section>

<section class="screen" data-tool="pin" data-floor="Floor 2">
<div data-part="head"></div>
<div class="d-flex">
<div data-part="nav"></div>
<div class="map-box flex-fill">
<svg viewBox="0 0 713 856"><use href="#landTwo" width="713" height="856"/><use href="#places"/>
<text class="pin-name" x="142" y="329">Garden Center</text><text class="pin-name" x="206" y="460">Conference Zone</text><text class="pin-name" x="107" y="568">Information</text><text class="pin-name" x="196" y="641">Business Center</text>
<path d="M236 304l6 6 6-6z" fill="#2779be"/><circle class="lifted" cx="242" cy="283" r="23" fill="#2779be"/><circle cx="242" cy="283" r="5" fill="#fff"/><circle cx="242" cy="317" r="2.500" fill="#2779be"/></svg>
<div data-part="tools"></div>
</div>
<aside class="side d-flex flex-column">
<div class="side-head d-flex align-items-center justify-content-center"><button class="back-btn" aria-label="Back"><svg class="ic"><use href="#back"/></svg></button><h2>Add Placemark</h2></div>
<div class="strip">RECENTS</div>
<div class="pick-grid">
<button class="disc d62 c-amber" aria-label="Information"><svg><use href="#g-info"/></svg></button>
<button class="disc d62 c-blue" aria-label="Parking"><svg><use href="#g-park"/></svg></button>
<button class="disc d62 c-purple" aria-label="Pet area"><svg><use href="#g-dog"/></svg></button>
<button class="disc d62 c-slate" aria-label="Lounge"><svg><use href="#g-chair"/></svg></button>
<button class="disc d62 c-purple" aria-label="Accessible"><svg><use href="#g-wheel"/></svg></button>
<button class="disc d62 c-green" aria-label="Shop"><svg><use href="#g-sale"/></svg></button>
</div>
<div class="strip">AMENITIES</div>
<div class="pick-grid">
<button class="disc d62 c-amber" aria-label="Information"><svg><use href="#g-info"/></svg></button>
<button class="disc d62 c-amber" aria-label="Restrooms"><svg><use href="#g-rest"/></svg></button>
<button class="disc d62 c-amber" aria-label="Men"><svg><use href="#g-man"/></svg></button>
<button class="disc d62 c-amber" aria-label="Men accessible"><svg><use href="#g-manwc"/></svg></button>
<button class="disc d62 c-amber" aria-label="All accessible"><svg><use href="#g-allwc"/></svg></button>
<button class="disc d62 c-amber" aria-label="Women accessible"><svg><use href="#g-womwc"/></svg></button>
<button class="disc d62 c-amber" aria-label="Women"><svg><use href="#g-woman"/></svg></button>
<button class="disc d62 c-amber" aria-label="Kiosk"><svg><use href="#g-kiosk"/></svg></button>
<button class="disc d62 c-amber" aria-label="Baby care"><svg><use href="#g-baby"/></svg></button>
<button class="disc d62 c-amber" aria-label="Telephone"><svg><use href="#g-phone"/></svg></button>
<button class="disc d62 c-amber" aria-label="Coat check"><svg><use href="#g-hang"/></svg></button>
<button class="disc d62 c-none" aria-label="More amenities"><svg><use href="#g-plus"/></svg></button>
</div>
<div class="strip">EMERGENCY</div>
<div class="pick-grid">
<button class="disc d62 c-red" aria-label="Medical"><svg><use href="#g-aid"/></svg></button>
<button class="disc d62 c-red" aria-label="Fire exit"><svg><use href="#g-fire"/></svg></button>
<button class="disc d62 c-red" aria-label="First aid"><svg><use href="#g-kit"/></svg></button>
<button class="disc d62 c-red" aria-label="Security"><svg><use href="#g-badge"/></svg></button>
<button class="disc d62 c-red" aria-label="Defibrillator"><svg><use href="#g-heart"/></svg></button>
<button class="disc d62 c-none" aria-label="More emergency"><svg><use href="#g-plus"/></svg></button>
</div>
</aside>
</div>
</section>
</main>
<script>
// Fill every screen with the shared header, navigation and map tools.
document.querySelectorAll('.screen').forEach(function (screen) {
  screen.querySelectorAll('[data-part]').forEach(function (slot) {
    slot.replaceWith(document.getElementById(slot.dataset.part + 'Part').content.cloneNode(true));
  });
  screen.querySelector('.tools-left [data-tool="' + screen.dataset.tool + '"]').classList.add('on');
  screen.querySelector('.floor-name').textContent = screen.dataset.floor;
});
</script>
</body>
</html>
